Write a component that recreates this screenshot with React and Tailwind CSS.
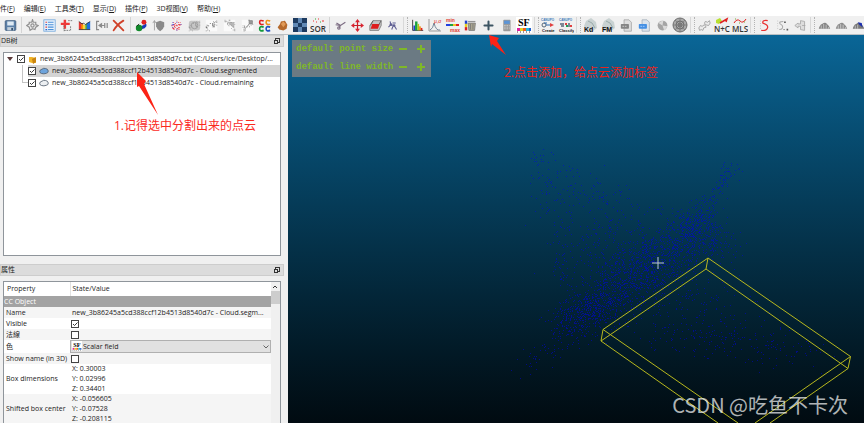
import { Fragment } from 'react'

const menus = [
  ['件', 'F'],
  ['编辑', 'E'],
  ['工具类', 'T'],
  ['显示', 'D'],
  ['插件', 'P'],
  ['3D视图', 'V'],
  ['帮助', 'H'],
]

// small seeded generator so the cloud is the same on every render
function makeRandom(seed) {
  let s = seed
  return () => {
    s = (s * 16807) % 2147483647
    return s / 2147483647
  }
}

// bands of points: start, end, spread, count
const bands = [
  [578, 320, 704, 224, 24, 1050],
  [596, 302, 700, 235, 44, 480],
  [688, 232, 706, 222, 24, 160],
  [694, 222, 736, 163, 9, 110],
  [524, 366, 590, 318, 14, 90],
  [556, 322, 600, 300, 16, 160],
  [532, 152, 612, 205, 16, 60],
  [536, 160, 566, 290, 12, 80],
  [560, 190, 650, 240, 34, 120],
  [560, 245, 640, 262, 36, 170],
  [640, 300, 740, 325, 34, 170],
  [650, 335, 720, 345, 18, 50],
  [720, 335, 812, 358, 18, 100],
  [705, 235, 732, 245, 16, 60],
]

function cloudPath() {
  const rnd = makeRandom(90451)
  let d = ''
  bands.forEach(([x1, y1, x2, y2, spread, count]) => {
    for (let i = 0; i < count; i++) {
      const t = rnd()
      const dx = (rnd() + rnd() + rnd() - 1.5) * spread
      const dy = (rnd() + rnd() + rnd() - 1.5) * spread
      const x = Math.round(x1 + (x2 - x1) * t + dx) - 288
      const y = Math.round(y1 + (y2 - y1) * t + dy) - 35
      d += `M${x} ${y}h1v1h-1z`
    }
  })
  return d
}

const cloud = cloudPath()

function specks(seed, count, inside) {
  const rnd = makeRandom(seed)
  let d = ''
  while (count > 0) {
    const x = Math.floor(rnd() * 14) + 1
    const y = Math.floor(rnd() * 14) + 1
    if (inside(x, y)) {
      d += `M${x} ${y}h1v1h-1z`
      count--
    }
  }
  return d
}

const round = (x, y) => (x - 7.5) ** 2 + (y - 7.5) ** 2 < 36
const redSpecks = specks(770123, 38, round)
const blueSpecks = specks(910457, 9, round)
const greySpecks = specks(350981, 26, (x, y) => x + y > 7 && x + y < 22)
const cornerSpecks = specks(190333, 24, (x, y) => y < x + 2)
const diagSpecks = specks(590777, 20, (x, y) => Math.abs(x + y - 15) < 6)

const icons = {
  Save: (
    <>
      <rect x="1.5" y="2" width="13" height="12" rx="1" fill="#5b80a8" stroke="#3d5a7b" />
      <rect x="4" y="3" width="8" height="5" fill="#dfeaf3" />
      <rect x="4" y="10" width="8" height="4" fill="#c3d0dc" />
      <rect x="9" y="11" width="2" height="3" fill="#2d4a6b" />
    </>
  ),
  Pick: (
    <g fill="none" stroke="#929292" strokeWidth="1.5">
      <path d="M8 1l1 3 3 0 0 3 3 1-3 2-1 3-3-1-3 2-1-4-3-2 3-2 0-2 3 0z" />
      <circle cx="8" cy="8" r="2" />
    </g>
  ),
  Properties: (
    <>
      <rect x="1" y="1" width="14" height="14" fill="#eaf3fc" stroke="#6ea6dc" />
      <path d="M6 4h7M6 7h7M6 10h7M6 13h7" stroke="#4a90d9" strokeWidth="1.3" />
      <path d="M3 4h2M3 10h2" stroke="#e04040" strokeWidth="1.5" />
      <path d="M3 7h2M3 13h2" stroke="#3366cc" strokeWidth="1.5" />
    </>
  ),
  Center: (
    <>
      <path d="M6 1v11M1 6h11" stroke="#ee3a3a" strokeWidth="3" />
      <path d="M10 2h5M5 8v7M5 14h7M13 9v5" stroke="#666" strokeDasharray="2 1" />
    </>
  ),
  Rainbow: (
    <>
      <path d="M1 3l3 2 2 0v8H1z" fill="#e53935" />
      <path d="M4 6l3 1v6H4z" fill="#fb8c00" />
      <path d="M6 8l3-1v6H6z" fill="#fdd835" />
      <path d="M9 7l2-2v8H9z" fill="#43a047" />
      <path d="M11 5l4-2v10h-4z" fill="#1e6fe0" />
      <path d="M1 13h14M1 3l4 3 2-1 2 2 3-2 3-2" stroke="#333" fill="none" />
    </>
  ),
  Merge: (
    <g fill="none" stroke="#8b8b8b" strokeWidth="1.5">
      <path d="M5 3H2v10h3M6 8h6M12 5v6M15 5v6" />
      <path d="M8 6L5 8l3 2z" fill="#8b8b8b" />
    </g>
  ),
  Delete: <path d="M2 2q6 6 12 12M14 2Q6 7 2 14" stroke="#d04028" strokeWidth="2.2" strokeLinecap="round" fill="none" />,
  Sample: (
    <>
      <path d="M10 3q5 2 4 6-2 4-7 3l2-4 3-1z" fill="#1838b8" />
      <circle cx="11" cy="4" r="3" fill="#e02020" />
      <circle cx="5" cy="11" r="4" fill="#138a2c" />
      <path d="M2 9l3-3" stroke="#111" />
    </>
  ),
  Normals: (
    <>
      <path d="M3 2v12M1 5l2-3 2 3" stroke="#999" fill="none" />
      <path d="M10 2l5 2v5q-1 4-5 6-4-2-5-6V4z" fill="#8a8a8a" />
    </>
  ),
  Scatter: (
    <>
      <path d={redSpecks} fill="#ee2233" />
      <path d={blueSpecks} fill="#2233dd" />
    </>
  ),
  Octree: (
    <>
      <rect x="1" y="2" width="14" height="12" rx="3" fill="#c6c6c6" />
      <path d={greySpecks} fill="#999" />
      <circle cx="8" cy="8" r="4" fill="none" stroke="#999" />
    </>
  ),
  Distances: (
    <>
      <rect x="1" y="1" width="14" height="14" fill="#fafafa" />
      <path d={greySpecks} fill="#666" />
      <path d="M10 7l4-5M9 10l4-3" stroke="#aaa" />
    </>
  ),
  Slice: (
    <>
      <rect x="1" y="1" width="14" height="14" fill="#fafafa" />
      <path d={cornerSpecks} fill="#999" />
      <path d="M4 3l10 1v8z" fill="#999" fillOpacity=".7" />
    </>
  ),
  Primitive: (
    <>
      <rect x="1" y="1" width="14" height="14" fill="#fafafa" />
      <path d={diagSpecks} fill="#888" />
      <path d="M10 2h4v4h-4zM4 13l7-8" stroke="#888" fill="#999" />
    </>
  ),
  Components: (
    <g fill="none" strokeWidth="2">
      <path d="M7 2.5Q2 .5 2 4t5 2.500" stroke="#e02020" />
      <path d="M15 2.500Q10 .5 10 4t5 2.500" stroke="#f09018" />
      <path d="M7 10Q2 8 2 12t5 2" stroke="#149a3a" />
      <path d="M15 10Q10 8 10 12t5 2" stroke="#2050c0" />
    </g>
  ),
  Mesh: (
    <>
      <path d="M2 10l3-4 1-3 5-1 3 5-1 5-4 2-5-1z" fill="#b5692c" />
      <path d="M6 6l3-3 3 3-3 4z" fill="#e09a58" />
    </>
  ),
  Grid: (
    <>
      <rect x="1" y="1" width="14" height="14" fill="#1d3a5f" />
      <path d="M6 1h4v5H6zM1 6h5v4H1zM10 6h5v4h-5zM6 10h4v5H6z" fill="#6088b4" />
    </>
  ),
  'Outlier filter': (
    <>
      <path d="M3 4h1M8 2h1M12 4h2M6 5h1" stroke="#e33" strokeWidth="1.200" />
      <path d="M5 2h1M10 5h1" stroke="#3a3" strokeWidth="1.200" />
      <text x="0" y="15" fontFamily="Open Sans" fontSize="8" fontWeight="600" fill="#333">SOR</text>
    </>
  ),
  Cut: (
    <g fill="none" stroke="#7a6a80" strokeWidth="1.400">
      <path d="M2 7l6 1 6-4M8 8l-2 3" />
      <circle cx="6" cy="11" r="1.500" />
      <path d="M3 5l5 3" />
    </g>
  ),
  Translate: (
    <>
      <path d="M8 2v12M2 8h12" stroke="#c81e28" strokeWidth="1.500" />
      <path d="M8 0l3 4H5zM8 16l3-4H5zM0 8l4-3v6zM16 8l-4-3v6z" fill="#d82430" />
    </>
  ),
  'Cross section': (
    <>
      <path d="M5 2h10v6l-3 6H1V8z" fill="#c4c4c4" stroke="#777" />
      <path d="M4 6h9l-2 6H2z" fill="#dd1c1c" />
      <path d="M5 2L2 8M15 2l-3 5" stroke="#555" fill="none" />
    </>
  ),
  Trace: (
    <g fill="none" stroke="#5d5d92" strokeWidth="1.300">
      <path d="M5 3l1 4 4 1 3 5M6 7l-3 3M9 8l-2 5M8 5h4" />
      <circle cx="6" cy="7" r="1" />
      <circle cx="10" cy="8" r="1" />
    </g>
  ),
  Histogram: (
    <>
      <path d="M2 1v13h13" stroke="#222" fill="none" />
      <rect x="3" y="8" width="2" height="6" fill="#2040d0" />
      <rect x="5" y="3" width="3" height="11" fill="#18a040" />
      <rect x="8" y="6" width="2" height="8" fill="#b0c818" />
      <rect x="10" y="9" width="2" height="5" fill="#f09010" />
      <rect x="12" y="11" width="2" height="3" fill="#e02020" />
    </>
  ),
  Statistics: (
    <>
      <path d="M2 2v12h12" stroke="#999" fill="none" />
      <path d="M3 13q3-1 4-7 2 8 6 7" stroke="#789" fill="none" />
      <text x="7" y="6" fontFamily="Liberation Sans" fontSize="5" fill="#e02020">μ,σ</text>
    </>
  ),
  'Min max': (
    <>
      <text x="1" y="5" fontFamily="Liberation Sans" fontSize="5" fontWeight="bold" fill="#e04030">min</text>
      <text x="5" y="15" fontFamily="Liberation Sans" fontSize="5" fontWeight="bold" fill="#e04030">max</text>
      <path d="M1 8h4" stroke="#2040e0" strokeWidth="2" />
      <path d="M5 8h3" stroke="#20a040" strokeWidth="2" />
      <path d="M8 8h3" stroke="#f0c020" strokeWidth="2" />
      <path d="M11 8h3" stroke="#e02020" strokeWidth="2" />
    </>
  ),
  'Remove field': (
    <>
      <rect x="1" y="2" width="3" height="4" fill="#2040d0" />
      <rect x="1" y="6" width="3" height="4" fill="#e8d020" />
      <rect x="1" y="10" width="3" height="4" fill="#d82020" />
      <path d="M5 5h9l-1 9H6z" fill="#aaa590" stroke="#777" />
      <path d="M5 3h9M8 6v7M11 6v7" stroke="#777" />
    </>
  ),
  'Add field': <path d="M8 3v10M3 8h10" stroke="#3d5563" strokeWidth="2.500" strokeLinecap="round" />,
  Calculator: (
    <>
      <rect x="4" y="1" width="9" height="14" rx="1" fill="#9a9a9a" />
      <rect x="5" y="2" width="7" height="4" fill="#5c94d6" />
      <path d="M5 8h7M5 10h7M5 12h7" stroke="#ccc" strokeDasharray="2 1" />
    </>
  ),
  'Scalar field': (
    <>
      <rect width="16" height="16" fill="#fff" />
      <text x="2" y="9" fontFamily="Liberation Serif" fontSize="10" fontWeight="bold" fill="#000">SF</text>
      <path d="M1 11h3v3H1z" fill="#e020a0" />
      <path d="M4 11h3v3H4z" fill="#e8d020" />
      <path d="M7 11h3v3H7z" fill="#f06020" />
      <path d="M10 11h3v3h-3z" fill="#20b8e0" />
      <path d="M13 11h2v3h-2z" fill="#2060d0" />
      <path d="M1 15h14" stroke="#333" strokeDasharray="1 2" />
    </>
  ),
  'Canupo create': (
    <>
      <text x="1" y="4" fontFamily="Liberation Sans" fontSize="3" fontWeight="bold" fill="#3a78b8">CANUPO</text>
      <circle cx="4" cy="8" r="2" fill="none" stroke="#567" />
      <path d="M6 8h4M4 6h3" stroke="#2a6ab0" />
      <path d="M10 6l4 2-4 2z" fill="#e04040" />
      <text x="2" y="15" fontFamily="Liberation Sans" fontSize="4" fontWeight="bold" fill="#111">Create</text>
    </>
  ),
  'Canupo classify': (
    <>
      <text x="1" y="4" fontFamily="Liberation Sans" fontSize="3" fontWeight="bold" fill="#3a78b8">CANUPO</text>
      <path d="M2 7h4M3 9h3M11 6v4" stroke="#567" strokeWidth="1.500" />
      <path d="M7 7h2M12 9h2" stroke="#e04040" strokeWidth="2" />
      <path d="M8 9h2" stroke="#20a050" strokeWidth="2" />
      <text x="1" y="15" fontFamily="Liberation Sans" fontSize="4" fontWeight="bold" fill="#111">Classify</text>
    </>
  ),
  'Kd tree': (
    <>
      <path d="M4 4l5-3 5 4 1 6-4 3H4L2 9z" fill="#c9d2d2" />
      <path d="M6 4l4 2 3 5" stroke="#9aa" fill="none" />
      <text x="2" y="15" fontFamily="Liberation Sans" fontSize="7" fontWeight="bold" fill="#111">Kd</text>
    </>
  ),
  'Fast marching': (
    <>
      <path d="M4 4l5-3 5 4 1 6-4 3H4L2 9z" fill="#c9d2d2" />
      <path d="M6 4l4 2 3 5" stroke="#9aa" fill="none" />
      <text x="2" y="15" fontFamily="Liberation Sans" fontSize="7" fontWeight="bold" fill="#111">FM</text>
    </>
  ),
  'Export facets': (
    <>
      <path d="M5 1h6l3 3v11H5z" fill="#dedede" stroke="#a5a5a5" />
      <rect x="1" y="6" width="10" height="6" rx="1" fill="#858585" />
      <path d="M3 9h6" stroke="#d8d8d8" strokeDasharray="2 1" />
    </>
  ),
  'Export info': (
    <>
      <path d="M5 1h6l3 3v11H5z" fill="#dce4ec" stroke="#a5b0bb" />
      <rect x="1" y="6" width="10" height="6" rx="1" fill="#4590e4" />
      <path d="M3 9h6" stroke="#b8d8ff" strokeDasharray="2 1" />
    </>
  ),
  Sphere: (
    <>
      <circle cx="8" cy="8" r="6" fill="#a5a5a5" />
      <path d="M8 8L3 5q3-3 6-3zM8 8l6 1q-1 3-4 5z" fill="#dadada" />
    </>
  ),
  Stereogram: (
    <g fill="none" stroke="#6e6e6e">
      <circle cx="8" cy="8" r="7" fill="#a8a8a8" />
      <circle cx="8" cy="8" r="4" />
      <circle cx="8" cy="8" r="2" />
      <path d="M8 1v14M1 8h14M3 3l10 10M13 3L3 13" strokeWidth=".6" />
    </g>
  ),
  Facets: (
    <g fill="#ebebeb" stroke="#999">
      <path d="M9 3l3 1 2-2 1 3-2 3-4-1-1-2zM3 8l2 1 3-2 2 3-3 1-1 3-2-1-2 1-1-3z" />
    </g>
  ),
  'Normals and curvature': (
    <>
      <path d="M2 3l4-2 2 3-3 3-3-1z" fill="#b8e030" />
      <path d="M6 6l7-4-1 3" stroke="#e02020" strokeWidth="1.500" fill="none" />
      <text x="0" y="15" fontFamily="Open Sans" fontSize="8" fontWeight="600" fill="#333">N+C</text>
    </>
  ),
  Smoothing: (
    <>
      <path d="M2 6q3-5 6-2t6-2" stroke="#e02020" fill="none" />
      <path d="M3 2h1M7 6h1M12 5h1" stroke="#7a3" />
      <text x="0" y="15" fontFamily="Open Sans" fontSize="8" fontWeight="600" fill="#333">MLS</text>
    </>
  ),
  Spline: (
    <>
      <path d="M3 2v12" stroke="#aaa" strokeDasharray="1 2" />
      <path d="M12 2q-7-1-6 3 6 2 6 5-1 5-8 4" stroke="#e83030" strokeWidth="1.500" fill="none" />
    </>
  ),
  'Spline points': (
    <>
      <path d="M2 2v12" stroke="#bbb" strokeDasharray="1 2" />
      <path d="M9 3q-6 0-4 3 4 2 3 5-1 2-4 2" stroke="#aaa" strokeWidth="1.300" fill="none" />
      <path d="M10 3h2v2h-2zM13 12h2v2h-2z" fill="#555" />
      <path d="M9 13h2" stroke="#777" />
    </>
  ),
  Import: (
    <g fill="#ddd" stroke="#a5a5a5">
      <path d="M8 6V2l5 1v11l-5-1V9H5v2L1 8l4-3v1zM10 8h4" />
    </g>
  ),
  'Hill one': (
    <>
      <path d="M1 12q1-5 4-6 4-3 6 0 3 2 4 6z" fill="#858585" />
      <path d="M4 12V8M7 12V6M10 12V7M13 12v-2" stroke="#ccc" />
    </>
  ),
  'Hill two': (
    <>
      <path d="M1 12q1-5 4-6 4-3 6 0 3 2 4 6z" fill="#8c8c8c" />
      <path d="M4 12V8M7 12V6M10 12V7M13 12v-2" stroke="#d5d5d5" />
    </>
  ),
  'Hill three': (
    <>
      <path d="M1 12q1-5 4-6 4-3 6 0 3 2 4 6z" fill="#777" />
      <path d="M7 4l5 1 1 5-4-3z" fill="#1c2fb0" />
      <path d="M4 12V8M7 12V7" stroke="#ccc" />
    </>
  ),
}

const lettered = ['Outlier filter', 'Scalar field', 'Canupo create', 'Canupo classify', 'Kd tree', 'Fast marching', 'Normals and curvature', 'Smoothing', 'Min max', 'Statistics', 'Stereogram', 'Grid']

// handle: dotted grip drawn before the group instead of a plain line
const groups = [
  { width: 'w-4', names: ['Save'] },
  { width: 'w-[103px]', names: ['Pick', 'Properties', 'Center', 'Rainbow', 'Merge', 'Delete'] },
  {
    width: 'w-[193px]',
    names: ['Sample', 'Normals', 'Scatter', 'Octree', 'Distances', 'Slice', 'Primitive', 'Components', 'Mesh', 'Grid', 'Outlier filter'],
  },
  { width: 'w-[69px]', names: ['Cut', 'Translate', 'Cross section', 'Trace'] },
  {
    width: 'w-[123px]',
    handle: true,
    names: ['Histogram', 'Statistics', 'Min max', 'Remove field', 'Add field', 'Calculator', 'Scalar field'],
  },
  { width: 'w-[34px]', handle: true, names: ['Canupo create', 'Canupo classify'] },
  {
    width: 'w-[106px]',
    handle: true,
    names: ['Kd tree', 'Fast marching', 'Export facets', 'Export info', 'Sphere', 'Stereogram'],
  },
  { width: 'w-[52px]', handle: true, names: ['Facets', 'Normals and curvature', 'Smoothing'] },
  { width: 'w-[52px]', handle: true, names: ['Spline', 'Spline points', 'Import'] },
  { width: 'w-[50px]', handle: true, names: ['Hill one', 'Hill two', 'Hill three'] },
]

function Toolbar() {
  return (
    <div className="flex h-[19px] items-center overflow-hidden border-b border-[#b9bfc3] bg-[#f0f0f0] pl-0.5">
      {groups.map((group, i) => (
        <Fragment key={i}>
          {i > 0 && !group.handle && (
            <div className="flex w-[6px] shrink-0 justify-center">
              <div className="h-4 w-px bg-[#d4d4d4]" />
            </div>
          )}
          {group.handle && (
            <div className="flex w-2 shrink-0 justify-center gap-[3px]">
              <div className="h-4 w-px bg-[#d8d8d8]" />
              <div className="h-4 border-l border-dotted border-[#b4b4b4]" />
            </div>
          )}
          <div className={`flex shrink-0 justify-between ${group.width}`}>
            {group.names.map(name => (
              <button key={name} aria-label={name} className="flex h-4 w-4 shrink-0 items-center justify-center">
                <svg viewBox="0 0 16 16" className={lettered.includes(name) ? 'h-4 w-4' : 'h-[13px] w-[13px]'}>
                  {icons[name]}
                </svg>
              </button>
            ))}
          </div>
        </Fragment>
      ))}
    </div>
  )
}

function Check({ checked, label }) {
  return (
    <span className="relative block h-2 w-2 shrink-0">
      <input
        type="checkbox"
        defaultChecked={checked}
        aria-label={label}
        className="peer block h-2 w-2 appearance-none border border-[#444] bg-white"
      />
      <svg viewBox="0 0 8 8" className="pointer-events-none absolute inset-0 hidden h-2 w-2 peer-checked:block">
        <path d="M2 4l1.500 1.500L6.500 2.500" fill="none" stroke="#222" strokeWidth=".9" />
      </svg>
    </span>
  )
}

function PanelTitle({ children }) {
  return (
    <div className="flex h-3 shrink-0 items-center justify-between border border-[#cdcdcd] bg-[#dcdcdc] pr-0.5">
      <h2>{children}</h2>
      <button aria-label="Float panel" className="h-2 w-2">
        <svg viewBox="0 0 8 8" className="h-2 w-2" fill="#dcdcdc" stroke="#333">
          <rect x="2.500" y="1.500" width="4" height="4" />
          <rect x="1.500" y="3.500" width="3" height="3" />
        </svg>
      </button>
    </div>
  )
}

function CloudIcon({ fill }) {
  return (
    <svg viewBox="0 0 10 8" className="h-2 w-[10px] shrink-0">
      <path d="M2.500 6.500Q.5 6 .7 4.200 1 2.500 3 2.200 4.500.8 6.500 1.500 9 1.800 9.300 4 9.300 6 7.300 6.300 5 7.300 2.500 6.500z" fill={fill} stroke="#4c5b6b" strokeWidth=".8" />
    </svg>
  )
}

function Tree() {
  return (
    <div className="mx-[3px] mt-[5px] h-[204px] shrink-0 overflow-hidden border border-[#8f959b] bg-white">
      <div className="flex h-3 items-center pl-[3px]">
        <button aria-label="Collapse" className="w-[6px]">
          <svg viewBox="0 0 6 6" className="h-[6px] w-[6px]">
            <path d="M0 1h6L3 5z" fill="#5a3838" />
          </svg>
        </button>
        <label className="ml-1 flex flex-1 items-center gap-[3px]">
          <Check checked />
          <svg viewBox="0 0 9 9" className="h-[9px] w-[9px] shrink-0">
            <path d="M1 2l3 0 4 1v5l-4 0-3-1z" fill="#f0b428" />
            <path d="M4 4l4-2v5l-3 2z" fill="#c98410" />
          </svg>
          <span className="whitespace-nowrap">new_3b86245a5cd388ccf12b4513d8540d7c.txt (C:/Users/ice/Desktop/...</span>
        </label>
      </div>
      <div className="ml-[18px] h-6">
        <div className="flex h-3 items-center">
          <span className="h-3 w-[6px] shrink-0 border-l border-[#c4c4c4]" />
          <label className="flex h-3 flex-1 items-center gap-[3px] bg-[#d4d4d4]">
            <Check checked />
            <CloudIcon fill="#6ea4dc" />
            <span className="whitespace-nowrap">new_3b86245a5cd388ccf12b4513d8540d7c - Cloud.segmented</span>
          </label>
        </div>
        <div className="flex h-3">
          <span className="h-[6px] w-[6px] shrink-0 border-b border-l border-[#c4c4c4]" />
          <label className="flex h-3 flex-1 items-center gap-[3px]">
            <Check checked />
            <CloudIcon fill="#eceff2" />
            <span className="whitespace-nowrap">new_3b86245a5cd388ccf12b4513d8540d7c - Cloud.remaining</span>
          </label>
        </div>
      </div>
    </div>
  )
}

function Lines({ values }) {
  return values.map(v => <div key={v} className="leading-[10px]">{v}</div>)
}

function Properties() {
  return (
    <div className="mx-[3px] mt-[5px] flex min-h-0 flex-1 overflow-hidden border border-b-0 border-[#8f959b] bg-white">
      <div className="min-w-0 flex-1">
        <table className="w-full table-fixed border-collapse text-left">
          <colgroup>
            <col className="w-[66px]" />
            <col />
          </colgroup>
          <thead>
            <tr className="h-[14px]">
              <th className="border-r border-[#e2e2e2] pl-[3px] font-normal">Property</th>
              <th className="pl-0.5 font-normal">State/Value</th>
            </tr>
          </thead>
          <tbody>
            <tr className="h-[11px] bg-[#a3a3a3] text-white">
              <th colSpan="2" className="font-normal">CC Object</th>
            </tr>
            <tr className="h-[11px] bg-[#f5f5f5]">
              <td className="pl-0.5">Name</td>
              <td className="pl-0.5 whitespace-nowrap">new_3b86245a5cd388ccf12b4513d8540d7c - Cloud.segm...</td>
            </tr>
            <tr className="h-[11px]">
              <td className="pl-0.5">Visible</td>
              <td className="pl-px"><Check checked label="Visible" /></td>
            </tr>
            <tr className="h-[11px] bg-[#f5f5f5]">
              <td className="pl-0.5">法線</td>
              <td className="pl-px"><Check label="法線" /></td>
            </tr>
            <tr className="h-[13px]">
              <td className="pl-0.5"><label htmlFor="colors">色</label></td>
              <td>
                <div className="relative">
                  <select id="colors" className="block h-[13px] w-full appearance-none border border-[#b0b0b0] bg-[#e1e1e1] pl-3">
                    <option>Scalar field</option>
                  </select>
                  <svg viewBox="0 0 16 16" className="pointer-events-none absolute top-px left-[2px] h-[10px] w-[10px]">{icons['Scalar field']}</svg>
                  <svg viewBox="0 0 6 4" className="pointer-events-none absolute top-[5px] right-[2px] h-1 w-[6px]">
                    <path d="M.5 .5L3 3 5.500 .5" fill="none" stroke="#444" strokeWidth=".8" />
                  </svg>
                </div>
              </td>
            </tr>
            <tr className="h-[11px] bg-[#f5f5f5]">
              <td className="pl-0.5 whitespace-nowrap">Show name (in 3D)</td>
              <td className="pl-px"><Check label="Show name (in 3D)" /></td>
            </tr>
            <tr>
              <td className="pl-0.5">Box dimensions</td>
              <td className="pl-0.5"><Lines values={['X: 0.30003', 'Y: 0.02996', 'Z: 0.34401']} /></td>
            </tr>
            <tr className="bg-[#f5f5f5]">
              <td className="pl-0.5 whitespace-nowrap">Shifted box center</td>
              <td className="pl-0.5"><Lines values={['X: -0.056605', 'Y: -0.07528', 'Z: -0.208115']} /></td>
            </tr>
          </tbody>
        </table>
      </div>
      <div className="w-[9px] shrink-0 bg-[#f0f0f0]">
        <button aria-label="Scroll up" className="flex h-[9px] w-full items-center justify-center">
          <svg viewBox="0 0 6 4" className="h-1 w-[6px]">
            <path d="M1 3l2-2 2 2" fill="none" stroke="#333" />
          </svg>
        </button>
        <div className="h-[13px] bg-[#cdcdcd]" />
      </div>
    </div>
  )
}

function SizeRow({ label }) {
  return (
    <div className="flex h-[18px] items-center">
      <span className="flex-1 whitespace-nowrap">{label}</span>
      <button aria-label={`${label} smaller`} className="h-2 w-2">
        <svg viewBox="0 0 8 8" className="h-2 w-2"><path d="M0 4h8" stroke="#7fb828" strokeWidth="2" /></svg>
      </button>
      <button aria-label={`${label} larger`} className="ml-[10px] h-2 w-2">
        <svg viewBox="0 0 8 8" className="h-2 w-2"><path d="M0 4h8M4 0v8" stroke="#7fb828" strokeWidth="2" /></svg>
      </button>
    </div>
  )
}

function Viewport() {
  return (
    <main className="relative min-w-0 flex-1 overflow-hidden bg-linear-to-b from-[#0a6697] to-[#010b11]">
      <svg className="absolute top-0 left-0 h-[388px] w-[576px]" viewBox="0 0 576 388">
        <path d={cloud} fill="#0000e6" fillOpacity=".5" shapeRendering="crispEdges" />
        <g fill="none" stroke="#b8b81e">
          <path d="M420 223L315 294.500L313 306L418 234z" />
          <path d="M420 223L562.500 321.500L560 333.500L418 234" />
          <path d="M315 294.500L450 388M313 306L430 388M562.500 321.500L467 388M560 333.500L482 388" />
        </g>
        <path d="M370 222v12M364 228h12" stroke="#bcc8ce" />
      </svg>
      <div className="absolute top-[5px] left-1 w-[139px] bg-[#6b7a83] pr-[6px] pb-px pl-1 font-['Liberation_Mono',monospace] text-[9px] font-bold text-[#7fb828]">
        <SizeRow label="default point size" />
        <SizeRow label="default line width" />
      </div>
      <p className="absolute right-4 bottom-1 font-['Noto_Sans_CJK_SC',sans-serif] text-[20px] leading-7 whitespace-nowrap text-white/70">CSDN @吃鱼不卡次</p>
    </main>
  )
}

export default function App() {
  return (
    <div className="relative flex h-screen flex-col overflow-hidden bg-[#f0f0f0] font-['Open_Sans','Noto_Sans_CJK_SC',sans-serif] text-[7px] leading-[10px] text-[#1c1c1c]">
      <nav className="flex h-4 shrink-0 items-center gap-[9px] bg-white pt-0.5">
        {menus.map(([name, key]) => (
          <button key={key} className="whitespace-nowrap">
            {name}(<u>{key}</u>)
          </button>
        ))}
      </nav>
      <Toolbar />
      <div className="flex min-h-0 flex-1">
        <aside className="flex w-1/3 shrink-0 flex-col pr-1">
          <PanelTitle>DB树</PanelTitle>
          <Tree />
          <div className="h-2 shrink-0" />
          <PanelTitle>属性</PanelTitle>
          <Properties />
        </aside>
        <Viewport />
      </div>

      {/* tutorial notes over the window */}
      <svg viewBox="0 0 864 423" className="pointer-events-none absolute top-0 left-0 h-[423px] w-[864px]" fill="#fb2316">
        <path d="M137 72L146 81L144 84L158 115L139 86L137 87z" />
        <path d="M489 35L499 38L497 41L506 55L492 44L491 47z" />
      </svg>
      <p className="absolute top-[118px] left-[114px] text-[12px] leading-4 whitespace-nowrap text-[#fb2a1e]">1.记得选中分割出来的点云</p>
      <p className="absolute top-[65px] left-[504px] text-[12px] leading-4 whitespace-nowrap text-[#e8241c]">2.点击添加，给点云添加标签</p>
    </div>
  )
}
